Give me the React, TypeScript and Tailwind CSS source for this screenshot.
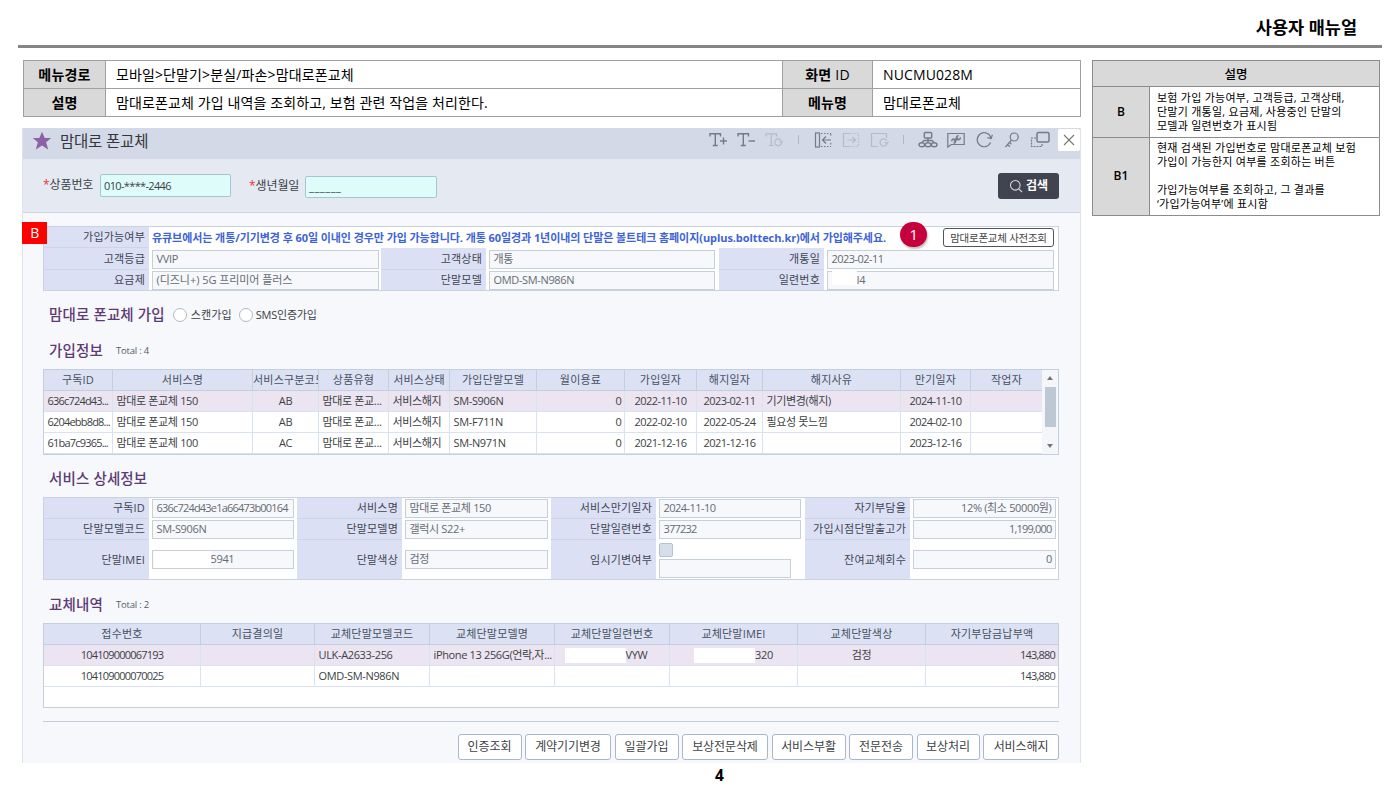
import type { ReactNode } from 'react'
import clsx from 'clsx'

const SUB_COLS = 'grid grid-cols-[69px_140px_66px_70px_61px_87px_88px_72px_66px_138px_70px_71px]'
const SWAP_COLS = 'grid grid-cols-[157px_114px_115px_125px_115px_128px_128px_132px]'

const SUB_HEAD = ['구독ID', '서비스명', '서비스구분코드', '상품유형', '서비스상태', '가입단말모델', '월이용료', '가입일자', '해지일자', '해지사유', '만기일자', '작업자']
const SUB_ALIGN = ['l', 'l', 'c', 'l', 'l', 'l', 'r', 'c', 'c', 'l', 'c', 'c']
const SUB_ROWS = [
  ['636c724d43...', '맘대로 폰교체 150', 'AB', '맘대로 폰교...', '서비스해지', 'SM-S906N', '0', '2022-11-10', '2023-02-11', '기기변경(해지)', '2024-11-10', ''],
  ['6204ebb8d8...', '맘대로 폰교체 150', 'AB', '맘대로 폰교...', '서비스해지', 'SM-F711N', '0', '2022-02-10', '2022-05-24', '필요성 못느낌', '2024-02-10', ''],
  ['61ba7c9365...', '맘대로 폰교체 100', 'AC', '맘대로 폰교...', '서비스해지', 'SM-N971N', '0', '2021-12-16', '2021-12-16', '', '2023-12-16', ''],
]

const SWAP_HEAD = ['접수번호', '지급결의일', '교체단말모델코드', '교체단말모델명', '교체단말일련번호', '교체단말IMEI', '교체단말색상', '자기부담금납부액']
const SWAP_ALIGN = ['c', 'c', 'l', 'l', 'c', 'c', 'c', 'r']
const SWAP_ROWS: ReactNode[][] = [
  [
    '104109000067193',
    '',
    'ULK-A2633-256',
    'iPhone 13 256G(언락,자...',
    <Masked key="sn" className="mr-3" text="VYW" />,
    <Masked key="imei" text="320" />,
    '검정',
    '143,880',
  ],
  ['104109000070025', '', 'OMD-SM-N986N', '', '', '', '', '143,880'],
]

const ACTIONS = [
  { label: '인증조회', w: 'w-[64px]' },
  { label: '계약기기변경', w: 'w-[86px]' },
  { label: '일괄가입', w: 'w-[64px]' },
  { label: '보상전문삭제', w: 'w-[86px]' },
  { label: '서비스부활', w: 'w-[74px]' },
  { label: '전문전송', w: 'w-[64px]' },
  { label: '보상처리', w: 'w-[63px]' },
  { label: '서비스해지', w: 'w-[76px]' },
]

// ids, dates and amounts are set tighter than words
function spacing(v: ReactNode) {
  if (typeof v !== 'string') return ''
  if (/^\d{4}-\d\d-\d\d$/.test(v)) return 'tracking-[-0.55px]'
  if (/^[\da-f.,]+$/.test(v)) return 'tracking-[-0.8px]'
  return ''
}

function Masked({ text, className }: { text: string; className?: string }) {
  return (
    <span className={clsx('flex items-center', className)}>
      <span className="h-[15px] w-[61px] bg-white" />
      {text}
    </span>
  )
}

function Cell({ align, children }: { align: string; children: ReactNode }) {
  return (
    <div
      className={clsx(
        'flex h-[21px] items-center overflow-hidden whitespace-nowrap border-b border-r border-[#d9e3f0] last:border-r-0',
        align === 'l' && 'pl-[3.5px]',
        align === 'c' && 'justify-center',
        align === 'r' && 'justify-end pr-[3px]',
        spacing(children),
      )}
    >
      {children}
    </div>
  )
}

function HeadCell({ label }: { label: string }) {
  return (
    <div
      className={clsx(
        'flex h-[21px] items-center overflow-hidden whitespace-nowrap border-b border-r border-[#c3cfdf] bg-[#dce2f4] text-[#47505f] tracking-[0.2px] last:border-r-0',
        label !== '서비스구분코드' && 'justify-center',
      )}
    >
      {label}
    </div>
  )
}

function Label({ children, last }: { children: ReactNode; last?: boolean }) {
  return (
    <div
      className={clsx(
        'flex items-center justify-end bg-[#dce0f4] pr-1 tracking-[0.2px] text-[#3f4552]',
        !last && 'border-b border-[#cdd5e6]',
      )}
    >
      {children}
    </div>
  )
}

function Field({ children, w, right }: { children?: ReactNode; w: string; right?: boolean }) {
  return (
    <div className="flex items-center bg-white pl-[3px]">
      <div
        className={clsx(
          'flex h-[19px] items-center whitespace-nowrap border border-[#c5d0d8] bg-[#f6f8fb] px-[3.5px] pb-px text-[#666b74]',
          w,
          right && 'justify-end',
          spacing(children),
        )}
      >
        {children}
      </div>
    </div>
  )
}

function SectionTitle({ children, total }: { children: ReactNode; total?: number }) {
  return (
    <div className="flex h-5 items-center pl-[6px]">
      <h2 className="text-[14.5px] font-medium tracking-[0.15px] text-[#5d3a75]">{children}</h2>
      {total !== undefined && <span className="ml-[13px] text-[9.5px] tracking-[-0.2px] text-[#555b66]">Total : {total}</span>}
    </div>
  )
}

function Icon({ children, faded }: { children: ReactNode; faded?: boolean }) {
  return (
    <span className="flex w-7 justify-center">
      <svg
        viewBox="0 0 20 20"
        className={clsx('h-5 w-5', faded ? 'text-[#b5bbc8]' : 'text-[#747b89]')}
        fill="none"
        stroke="currentColor"
        strokeWidth="1.2"
      >
        {children}
      </svg>
    </span>
  )
}

const BIG_T = 'M2 6.5V3.8H12.5V6.5M7.3 3.8V15.5M4.8 15.5H9.8'

function Toolbar() {
  return (
    <div className="flex h-[23px] items-center">
      <Icon>
        <path d={BIG_T} strokeWidth="1.4" />
        <path d="M12 11H19M15.5 7.5V14.5" strokeWidth="1.4" />
      </Icon>
      <Icon>
        <path d={BIG_T} strokeWidth="1.4" />
        <path d="M12.5 11H19" strokeWidth="1.4" />
      </Icon>
      <Icon faded>
        <path d={BIG_T} />
        <path d="M17.2 10.6A3.4 3.4 0 1 0 17.6 12.6M18.8 10.8L17.5 12.8L15.4 11.6" />
      </Icon>
      <span className="mx-[10px] h-[9px] w-px bg-[#b0b6c4]" />
      <Icon>
        <rect x="2.5" y="3" width="4" height="14" />
        <path d="M8 3.5H18M8 16.5H18M17.8 4V7M17.8 13V16" strokeDasharray="1.5 1.5" />
        <path d="M18 10H9.5M13 6.5L9.5 10L13 13.5" />
      </Icon>
      <Icon faded>
        <path d="M9 3.5H2.5V16.5H9" />
        <path d="M10 3.5H17.5V16.5H10" strokeDasharray="1.5 1.5" />
        <path d="M6.5 10H14.5M11.5 7L14.5 10L11.5 13" />
      </Icon>
      <Icon faded>
        <path d="M17.5 8V3.5H2.5V16.5H9" />
        <path d="M17.8 10.8A3.6 3.6 0 1 0 17.8 14.2M19.5 11.5L18 13.6L15.8 12.2" />
      </Icon>
      <span className="mx-[10px] h-[9px] w-px bg-[#b0b6c4]" />
      <Icon>
        <rect x="6.3" y="2.5" width="7.4" height="5.5" rx="1" strokeWidth="1.4" />
        <path d="M10 8V12M3.5 13L6 10.5H14L16.5 13" strokeWidth="1.4" />
        <ellipse cx="3.8" cy="14.8" rx="2.8" ry="2" strokeWidth="1.4" />
        <ellipse cx="10" cy="14.8" rx="2.8" ry="2" strokeWidth="1.4" />
        <ellipse cx="16.2" cy="14.8" rx="2.8" ry="2" strokeWidth="1.4" />
      </Icon>
      <Icon>
        <path d="M1.8 3.5H18.2V14.5H5.2L1.8 17Z" />
        <path d="M8 11.2L12 7.8" strokeWidth="1.8" />
        <path d="M14.3 7.4A2 2 0 1 1 12.6 5.8M5.8 11.4A2 2 0 1 1 7.4 13" strokeWidth="1.4" />
      </Icon>
      <Icon>
        <path d="M17 8A7 7 0 1 0 16.6 12.6" />
        <path d="M18.4 4.8L17.2 8.6L13.4 7.6" />
      </Icon>
      <Icon>
        <circle cx="12.2" cy="7" r="4" />
        <path d="M9.5 10L3.5 17M5.5 14.6L8 16.8M7.5 12.4L9.5 14.2" />
      </Icon>
      <Icon>
        <rect x="7" y="2.5" width="12" height="9.5" rx="1.5" strokeWidth="1.5" />
        <path d="M6 8H1.5V16.5H12V13" strokeDasharray="2 1" />
      </Icon>
      <button className="ml-[4px] flex h-[22px] w-[22px] items-center justify-center rounded-[2px] bg-white">
        <svg viewBox="0 0 12 12" className="h-3 w-3" stroke="#777" strokeWidth="1.1">
          <path d="M1 1L11 11M11 1L1 11" />
        </svg>
      </button>
    </div>
  )
}

function MenuInfo() {
  const head = 'flex items-center justify-center border-b border-r border-[#a0a0a0] bg-[#d9d9d9] font-bold tracking-[0.2px] pb-px'
  const body = 'flex items-center border-b border-r border-[#a0a0a0] pl-[10px] pb-px tracking-[0.12px]'
  return (
    <div className="ml-px grid w-[1058px] grid-cols-[82px_677px_90px_208px] grid-rows-[28px_28px] border-l border-t border-[#a0a0a0] text-[14px] text-black">
      <div className={head}>메뉴경로</div>
      <div className={body}>모바일&gt;단말기&gt;분실/파손&gt;맘대로폰교체</div>
      <div className={head}>
        화면&nbsp;<span className="font-medium">ID</span>
      </div>
      <div className={body}>NUCMU028M</div>
      <div className={head}>설명</div>
      <div className={body}>맘대로폰교체 가입 내역을 조회하고, 보험 관련 작업을 처리한다.</div>
      <div className={head}>메뉴명</div>
      <div className={body}>맘대로폰교체</div>
    </div>
  )
}

function Notes() {
  const tag = 'flex items-center justify-center border-b border-r border-[#8c8c8c] bg-[#d9d9d9] pb-px text-[12px] font-semibold'
  const text = 'border-b border-r border-[#8c8c8c] pl-[7px] text-[11px] leading-[14px] tracking-[0.25px] whitespace-pre'
  return (
    <div className="grid w-[288px] grid-cols-[57px_230px] grid-rows-[26px_51px_78px] border-l border-t border-[#8c8c8c] text-black">
      <div className="col-span-2 flex items-center justify-center border-b border-r border-[#8c8c8c] bg-[#d9d9d9] pt-1 text-[12.5px] font-medium">
        설명
      </div>
      <div className={tag}>B</div>
      <div className={clsx(text, 'pt-1')}>
        {'보험 가입 가능여부, 고객등급, 고객상태,\n단말기 개통일, 요금제, 사용중인 단말의\n모델과 일련번호가 표시됨'}
      </div>
      <div className={tag}>B1</div>
      <div className={clsx(text, 'pt-[3px]')}>
        {'현재 검색된 가입번호로 맘대로폰교체 보험\n가입이 가능한지 여부를 조회하는 버튼\n\n가입가능여부를 조회하고, 그 결과를\n‘가입가능여부’에 표시함'}
      </div>
    </div>
  )
}

function CustomerInfo() {
  return (
    <div className="relative">
      <div className="grid w-[1016px] grid-cols-[105px_232px_105px_233px_105px_234px] grid-rows-[21px_22px_20px] border border-[#c9d2dd] bg-white">
        <Label>가입가능여부</Label>
        <div className="col-span-5 flex items-center justify-between whitespace-nowrap pl-[3px] pr-1">
          <span className="text-[11px] font-bold tracking-[-0.07px] text-[#3d63d8]">
            유큐브에서는 개통/기기변경 후 60일 이내인 경우만 가입 가능합니다. 개통 60일경과 1년이내의 단말은 볼트테크 홈페이지(uplus.bolttech.kr)에서 가입해주세요.
          </span>
          <button className="h-[19px] w-[111px] rounded-[3px] border border-[#50545e] bg-white text-[10.5px] leading-[16px] tracking-[-0.25px] text-[#444]">
            맘대로폰교체 사전조회
          </button>
        </div>
        <Label>고객등급</Label>
        <Field w="w-[227px]">VVIP</Field>
        <Label>고객상태</Label>
        <Field w="w-[226px]">개통</Field>
        <Label>개통일</Label>
        <Field w="w-[227px]">2023-02-11</Field>
        <Label last>요금제</Label>
        <Field w="w-[227px]">
          <span className="tracking-[-0.05px]">(디즈니+) 5G 프리미어 플러스</span>
        </Field>
        <Label last>단말모델</Label>
        <Field w="w-[226px]">OMD-SM-N986N</Field>
        <Label last>일련번호</Label>
        <Field w="w-[227px]">
          <span className="-mt-1 h-[15px] w-[25px] bg-white" />
          I4
        </Field>
      </div>
      <div className="absolute -left-[21px] -top-1 flex h-[22px] w-[25px] items-center justify-center bg-[#fe0000] text-[14px] text-white">B</div>
      <div className="absolute left-[857px] -top-1 flex h-[25px] w-[27px] items-center justify-center rounded-full bg-[#c6003d] pb-px text-[15px] text-white shadow-[1px_2px_2px_rgba(0,0,0,0.25)]">
        1
      </div>
    </div>
  )
}

function Subscriptions() {
  return (
    <div className="flex w-[1016px] border border-[#c3cfdf] bg-white">
      <div>
        <div className={SUB_COLS}>
          {SUB_HEAD.map((h) => (
            <HeadCell key={h} label={h} />
          ))}
        </div>
        {SUB_ROWS.map((row, i) => (
          <div key={row[0]} className={clsx(SUB_COLS, i === 0 && 'bg-[#ece4f1]')}>
            {row.map((v, j) => (
              <Cell key={j} align={SUB_ALIGN[j]}>
                {v}
              </Cell>
            ))}
          </div>
        ))}
      </div>
      <div className="flex flex-1 flex-col items-center bg-[#f4f6fa]">
        <span className="mt-[6px] h-0 w-0 border-x-[3px] border-b-4 border-x-transparent border-b-[#777]" />
        <span className="mt-[7px] h-[40px] w-[11px] bg-[#bcc8d4]" />
        <span className="mt-[17px] h-0 w-0 border-x-[3px] border-t-4 border-x-transparent border-t-[#777]" />
      </div>
    </div>
  )
}

function ServiceDetail() {
  return (
    <div className="grid w-[1016px] grid-cols-[105px_148px_105px_149px_105px_149px_105px_148px] grid-rows-[21px_21px_39px] border border-[#c9d2dd] bg-white">
      <Label>구독ID</Label>
      <Field w="w-[142px]">636c724d43e1a66473b00164</Field>
      <Label>서비스명</Label>
      <Field w="w-[143px]">맘대로 폰교체 150</Field>
      <Label>서비스만기일자</Label>
      <Field w="w-[142px]">2024-11-10</Field>
      <Label>자기부담율</Label>
      <Field w="w-[143px]" right>
        12% (최소 50000원)
      </Field>
      <Label>단말모델코드</Label>
      <Field w="w-[142px]">SM-S906N</Field>
      <Label>단말모델명</Label>
      <Field w="w-[143px]">갤럭시 S22+</Field>
      <Label>단말일련번호</Label>
      <Field w="w-[142px]">377232</Field>
      <Label>가입시점단말출고가</Label>
      <Field w="w-[143px]" right>
        1,199,000
      </Field>
      <Label last>단말IMEI</Label>
      <Field w="w-[142px]">
        <span className="-ml-[3px] h-[17px] w-[57px] bg-white" />
        5941
      </Field>
      <Label last>단말색상</Label>
      <Field w="w-[143px]">검정</Field>
      <Label last>임시기변여부</Label>
      <div className="flex flex-col pl-[3px] pt-[3px]">
        <span className="h-[14px] w-[14px] rounded-[2px] border border-[#b4c2d2] bg-[#d5dfe9]" />
        <span className="mt-[2px] h-[19px] w-[132px] border border-[#c5d0d8] bg-[#f6f8fb]" />
      </div>
      <Label last>잔여교체회수</Label>
      <Field w="w-[143px]" right>
        0
      </Field>
    </div>
  )
}

function SwapHistory() {
  return (
    <div className="h-[85px] w-[1016px] border border-[#c3cfdf] bg-white">
      <div className={SWAP_COLS}>
        {SWAP_HEAD.map((h) => (
          <HeadCell key={h} label={h} />
        ))}
      </div>
      {SWAP_ROWS.map((row, i) => (
        <div key={i} className={clsx(SWAP_COLS, i === 0 && 'bg-[#ece4f1]')}>
          {row.map((v, j) => (
            <Cell key={j} align={SWAP_ALIGN[j]}>
              {v}
            </Cell>
          ))}
        </div>
      ))}
    </div>
  )
}

export default function App() {
  return (
    <div className="h-[788px] w-[1400px] overflow-hidden bg-white pt-[14px] font-['Open_Sans','Noto_Sans_CJK_KR',sans-serif]">
      <header className="ml-[18px] flex h-[34px] w-[1364px] justify-end border-b-[3px] border-[#858585] pr-[25px]">
        <h1 className="text-[17.5px] font-bold leading-[26px] text-black">사용자 매뉴얼</h1>
      </header>
      <div className="ml-[22px] mt-3 flex items-start gap-[11px]">
        <div className="w-[1059px]">
          <MenuInfo />
          <div className="mt-[11px] h-[635px] border-x border-[#dfe3ec] bg-[#f6f8fb] text-[11px] leading-[14px] tracking-[-0.35px] text-[#3c3f46]">
            <div className="flex h-[31px] items-start justify-between bg-[#d3d9e6]">
              <div className="flex h-[26px] items-center pl-[9px]">
                <svg viewBox="0 0 20 20" className="h-5 w-5" fill="#8a62a5">
                  <path d="M10 .8L12.7 7H19.2L14.1 11.2L16.2 18.6L10 14.6L3.8 18.6L5.9 11.2L.8 7H7.3Z" />
                </svg>
                <span className="ml-2 text-[15.5px] tracking-[-0.2px] text-[#33363d]">맘대로 폰교체</span>
              </div>
              <Toolbar />
            </div>
            <div className="flex h-[54px] items-start border-b border-[#ccd4e0] bg-[#e4e9f2] pl-5 pr-[21px] pt-[14px] tracking-[0px]">
              <span className="mt-[5px] w-[57px] text-[12px] tracking-[-0.1px]">
                <span className="text-[#e33]">*</span>상품번호
              </span>
              <div className="mt-px flex h-[23px] w-[131px] items-center rounded-[2px] border border-[#a9c4cf] bg-[#defcf9] pl-[3px] tracking-[-0.65px]">010-****-2446</div>
              <span className="ml-[18px] mt-[6px] w-[56px] text-[12px] tracking-[-0.1px]">
                <span className="text-[#e33]">*</span>생년월일
              </span>
              <div className="mt-[3px] flex h-[22px] w-[132px] items-center rounded-[2px] border border-[#a9c4cf] bg-[#defcf9] pl-[3px] tracking-[0.6px]">______</div>
              <button className="ml-auto flex h-[26px] w-[61px] items-center justify-center gap-[3px] rounded-[3px] bg-[#414450] text-[12px] font-bold text-white">
                <svg viewBox="0 0 14 14" className="h-[14px] w-[14px]" fill="none" stroke="#d5d7dd" strokeWidth="1.1">
                  <circle cx="6.3" cy="6.3" r="4.8" />
                  <path d="M9.8 9.8L13 13" />
                </svg>
                검색
              </button>
            </div>
            <div className="pl-5 pt-[13px]">
              <CustomerInfo />
              <div className="mt-[14px] flex items-center">
                <SectionTitle>맘대로 폰교체 가입</SectionTitle>
                <span className="ml-2 h-[14px] w-[14px] rounded-full border border-[#b4b9c2] bg-white" />
                <span className="ml-1 tracking-[0.1px]">스캔가입</span>
                <span className="ml-[7px] h-[14px] w-[14px] rounded-full border border-[#b4b9c2] bg-white" />
                <span className="ml-[3px] tracking-[-0.2px]">SMS인증가입</span>
              </div>
              <div className="mb-2 mt-4">
                <SectionTitle total={4}>가입정보</SectionTitle>
              </div>
              <Subscriptions />
              <div className="mb-2 mt-[14px]">
                <SectionTitle>서비스 상세정보</SectionTitle>
              </div>
              <ServiceDetail />
              <div className="mb-2 mt-[15px]">
                <SectionTitle total={2}>교체내역</SectionTitle>
              </div>
              <SwapHistory />
              <div className="mt-[13px] flex w-[1016px] justify-end gap-[3.5px] border-t border-[#c5cddc] pt-3">
                {ACTIONS.map((a) => (
                  <button
                    key={a.label}
                    className={clsx('h-[26px] rounded-[3px] border border-[#aab6ca] bg-white pb-px text-[12px] tracking-[-0.1px] text-[#3c3f46]', a.w)}
                  >
                    {a.label}
                  </button>
                ))}
              </div>
            </div>
          </div>
        </div>
        <Notes />
      </div>
      <p className="ml-[715px] mt-[2px] text-[15.5px] font-bold leading-5 text-black">4</p>
    </div>
  )
}
